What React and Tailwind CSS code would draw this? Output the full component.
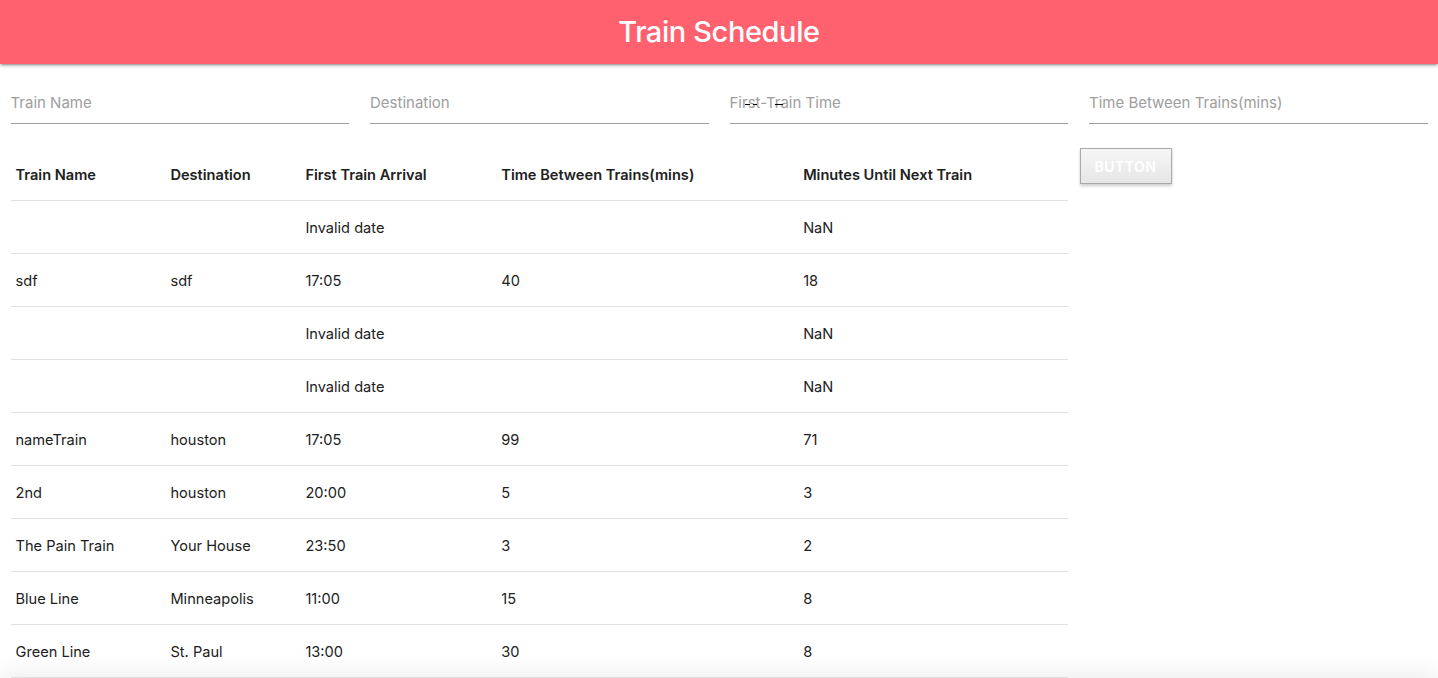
import React from "react";

const font = { fontFamily: "Inter, 'Noto Sans', sans-serif" };

const rows = [
  ["", "", "Invalid date", "", "NaN"],
  ["sdf", "sdf", "17:05", "40", "18"],
  ["", "", "Invalid date", "", "NaN"],
  ["", "", "Invalid date", "", "NaN"],
  ["nameTrain", "houston", "17:05", "99", "71"],
  ["2nd", "houston", "20:00", "5", "3"],
  ["The Pain Train", "Your House", "23:50", "3", "2"],
  ["Blue Line", "Minneapolis", "11:00", "15", "8"],
  ["Green Line", "St. Paul", "13:00", "30", "8"],
];

const headers = [
  "Train Name",
  "Destination",
  "First Train Arrival",
  "Time Between Trains(mins)",
  "Minutes Until Next Train",
];

const widths = ["w-[155px]", "w-[135px]", "w-[196px]", "w-[302px]", "w-[270px]"];

function Field({ placeholder, time }) {
  return (
    <div className="px-[10.5px]">
      <div className="relative h-[46px] border-b border-[#9e9e9e] flex items-center text-[15px] text-[#9e9e9e]">
        <span className="mt-[6px]">{placeholder}</span>
        {time && (
          <>
            <span className="absolute left-[15px] top-[26px] h-px w-[5px] bg-black" />
            <span className="absolute left-[23px] top-[26px] h-px w-[4px] bg-black" />
            <span className="absolute left-[45px] top-[26px] h-px w-[8px] bg-black" />
          </>
        )}
      </div>
    </div>
  );
}

export default function App() {
  return (
    <div className="min-h-screen bg-white text-[#212121]" style={font}>
      {/* Header */}
      <header className="h-16 bg-[#ff616f] flex items-center justify-center shadow-[0_2px_2px_0_rgba(0,0,0,0.14),0_3px_1px_-2px_rgba(0,0,0,0.12),0_1px_5px_0_rgba(0,0,0,0.2)]">
        <h1 className="text-[29px] text-white font-medium tracking-[-0.4px]">Train Schedule</h1>
      </header>

      {/* Inputs */}
      <div className="grid grid-cols-4 pt-[14px]">
        <Field placeholder="Train Name" />
        <Field placeholder="Destination" />
        <Field placeholder="First-Train Time" time />
        <Field placeholder="Time Between Trains(mins)" />
      </div>

      {/* Table + button */}
      <div className="flex pt-[23px]">
        <div className="w-3/4 px-[10.5px]">
          <table className="w-full border-collapse text-[14.6px]">
            <thead>
              <tr className="h-[53px] border-b border-[#e0e0e0]">
                {headers.map((h, i) => (
                  <th key={h} className={`${widths[i]} px-[5px] pt-[5px] text-left font-semibold text-[#212121]`}>
                    {h}
                  </th>
                ))}
              </tr>
            </thead>
            <tbody>
              {rows.map((r, ri) => (
                <tr key={ri} className="h-[53px] border-b border-[#e0e0e0]">
                  {r.map((c, ci) => (
                    <td key={ci} className="px-[5px] pt-[5px]">
                      {c}
                    </td>
                  ))}
                </tr>
              ))}
            </tbody>
          </table>
        </div>
        <div className="w-1/4">
          <button className="ml-px mt-px h-[36px] w-[92px] border border-[#a9a9a9] bg-linear-to-b from-[#f6f6f6] to-[#e6e6e6] text-white text-[14px] font-semibold tracking-[0.5px] shadow-[0_2px_3px_rgba(0,0,0,0.2)]">
            BUTTON
          </button>
        </div>
      </div>

      <footer className="h-16 bg-white shadow-[0_-4px_24px_rgba(0,0,0,0.08)]" />
    </div>
  );
}
